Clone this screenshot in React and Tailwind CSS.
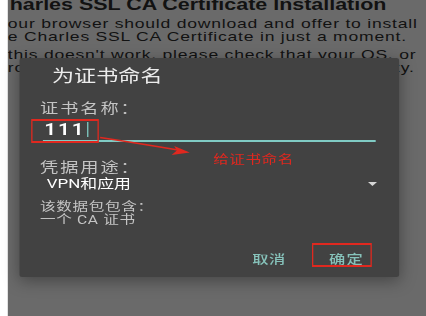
import React from 'react';

const cjk = { fontFamily: 'Roboto, "Noto Sans CJK SC", sans-serif' };

const App = () => {
  return (
    <div className="w-[426px] h-[316px] overflow-hidden bg-white">
      {/* screenshot is stretched sideways, so lay out narrow and scale */}
      <div className="relative w-[328px] h-[316px] origin-top-left scale-x-[1.3] flex">
        <div className="w-[6px] shrink-0 bg-white" />
        <div
          className="flex-1 bg-[#6a6a6a] text-[#121212] overflow-hidden"
          style={{ fontFamily: '"Liberation Sans", Arial, sans-serif' }}
        >
          <div className="-mt-[4.5px] pl-[1.5px] text-[16.5px] leading-[16px] font-bold whitespace-nowrap">
            harles SSL CA Certificate Installation
          </div>
          <div className="mt-[5px] text-[13.5px] leading-[13px] tracking-[0.6px] whitespace-nowrap">
            <div>our browser should download and offer to install</div>
            <div>e Charles SSL CA Certificate in just a moment.</div>
          </div>
          <div className="mt-[5px] text-[13.5px] leading-[13px] tracking-[0.6px] whitespace-nowrap">
            <div>this doesn't work, please check that your OS, or</div>
            <div className="flex justify-between pr-[9px]">
              <span>rowser is configured to use</span>
              <span>Charles as its proxy.</span>
            </div>
          </div>
        </div>

        {/* dialog */}
        <div
          className="absolute left-[15.4px] top-[58px] w-[292px] h-[219px] bg-[#424242] rounded-[2px] shadow-[0_4px_14px_rgba(0,0,0,0.35)] flex flex-col"
          style={cjk}
        >
          <div className="pt-[8px] pl-[24.6px] text-[17px] leading-[20px] text-[#ececec]">为证书命名</div>
          <div className="mt-[14px] pl-[15.4px] text-[14px] leading-[16px] tracking-[1.5px] text-[#c4c4c4]">证书名称：</div>
          <div className="mt-[5px] ml-[17.6px] w-[256px] border-b-2 border-[#80cbc4] flex items-center pb-[2px]">
            <span className="pl-[1px] text-[16px] leading-[17px] font-semibold tracking-[1.5px] text-white">111</span>
            <span className="w-[1.2px] h-[15px] bg-[#80cbc4] ml-[1px]" />
          </div>
          <div className="mt-[17px] pl-[15.4px] text-[14px] leading-[16px] tracking-[1.5px] text-[#c4c4c4]">凭据用途：</div>
          <div className="mt-[1px] pl-[20.6px] pr-[17.4px] flex items-center justify-between">
            <span className="text-[13px] leading-[15px] text-white">VPN和应用</span>
            <svg width="7" height="4" viewBox="0 0 7 4" className="mt-[1px]">
              <path d="M0 0 L7 0 L3.5 4 Z" fill="#d6d6d6" />
            </svg>
          </div>
          <div className="mt-[10px] pl-[15.4px] text-[12px] leading-[13px] tracking-[0.5px] text-[#c4c4c4]">
            <div>该数据包包含：</div>
            <div>一个 CA 证书</div>
          </div>
          <div className="mt-[25px] flex items-center text-[12.5px] leading-[16px] font-medium text-[#86c2ba]">
            <span className="ml-[178.6px] tracking-[0.5px]">取消</span>
            <span className="ml-[33px] tracking-[1px]">确定</span>
          </div>
        </div>

        {/* annotations */}
        <div className="absolute left-[24px] top-[119px] w-[52px] h-[24px] border-y-2 border-x-[1.5px] border-[#e0281f]" />
        <div className="absolute left-[240px] top-[243px] w-[46px] h-[24px] border-y-2 border-x-[1.5px] border-[#e0281f]" />
        <div
          className="absolute left-[164px] top-[152px] text-[12px] leading-[16px] tracking-[0.4px] text-[#e0281f]"
          style={cjk}
        >
          给证书命名
        </div>
        <svg className="absolute left-0 top-0 pointer-events-none" width="328" height="316" viewBox="0 0 328 316">
          <path d="M77 137.5 Q105 143 137 150" stroke="#e0281f" strokeWidth="1.6" fill="none" />
          <path d="M146 152.5 L134 146 L136 150.5 L132 155 Z" fill="#e0281f" />
        </svg>
      </div>
    </div>
  );
};

export default App;
